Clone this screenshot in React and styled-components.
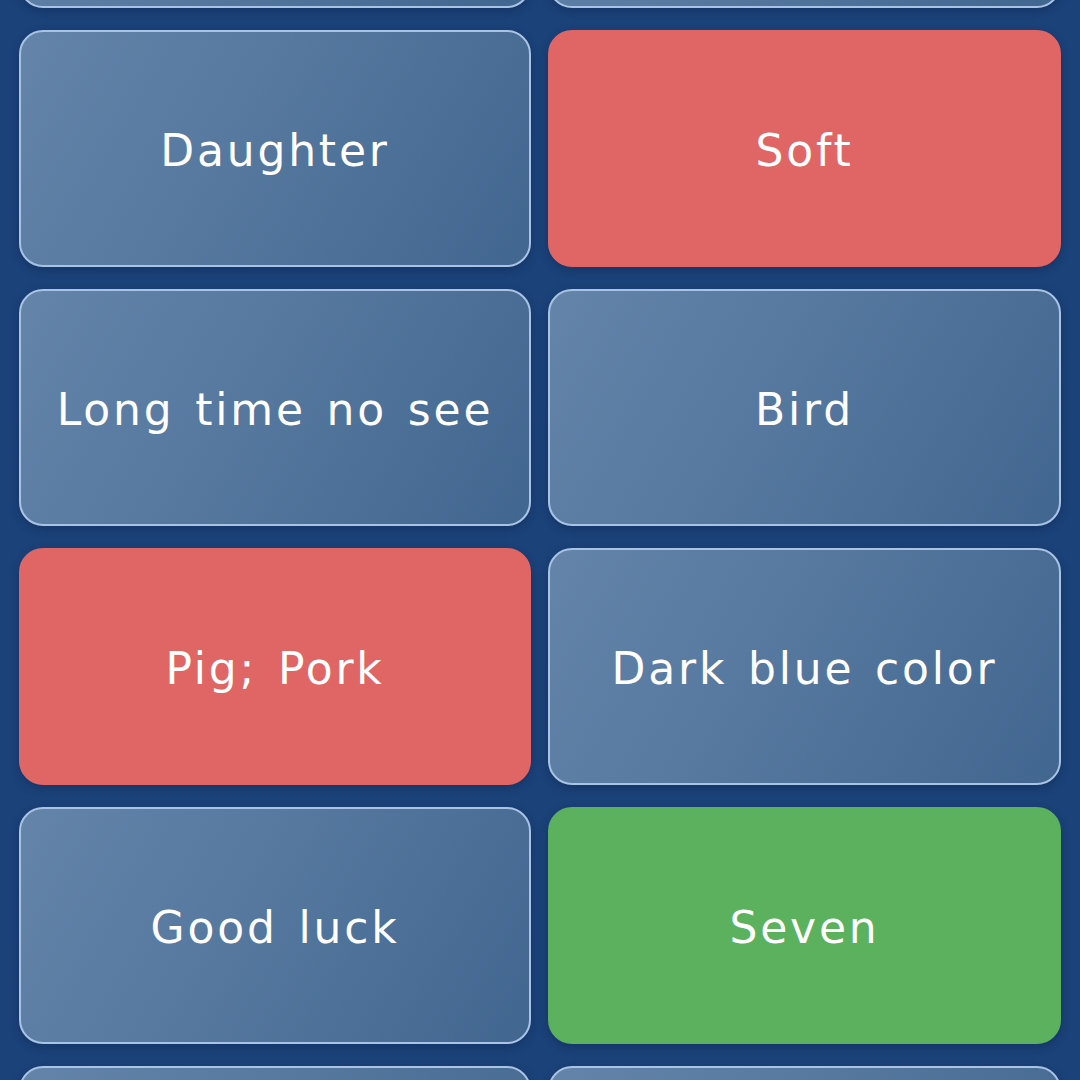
import React from "react";
import styled, { createGlobalStyle } from "styled-components";

const Global = createGlobalStyle`
  html, body {
    margin: 0;
    padding: 0;
    background: #1b4279;
    overflow: hidden;
  }
  body {
    width: 1080px;
    height: 1080px;
  }
`;

const Page = styled.div`
  width: 1080px;
  height: 1080px;
  overflow: hidden;
  background: #1b4279;
`;

const Grid = styled.div`
  display: grid;
  grid-template-columns: 512px 513px;
  grid-auto-rows: 237px;
  column-gap: 17px;
  row-gap: 22px;
  padding: 0 19px;
  margin-top: -229px;
`;

const variants = {
  plain: `
    background: linear-gradient(120deg, #6484a9 0%, #56789f 45%, #41668f 100%);
    border: 2px solid #a9c3e4;
  `,
  wrong: `
    background: #e06666;
    border: 2px solid #e06666;
  `,
  right: `
    background: #5bb15d;
    border: 2px solid #5bb15d;
  `,
};

const Card = styled.div`
  box-sizing: border-box;
  border-radius: 24px;
  display: flex;
  align-items: center;
  justify-content: center;
  color: #ffffff;
  font-family: "DejaVu Sans", "Open Sans", sans-serif;
  font-size: 44px;
  font-weight: 400;
  letter-spacing: 2.8px;
  word-spacing: 4px;
  padding-top: 3px;
  box-shadow: 0 3px 8px rgba(10, 30, 70, 0.35);
  ${(p) => variants[p.$variant]}
`;

const cards = [
  ["", "plain"],
  ["", "plain"],
  ["Daughter", "plain"],
  ["Soft", "wrong"],
  ["Long time no see", "plain"],
  ["Bird", "plain"],
  ["Pig; Pork", "wrong"],
  ["Dark blue color", "plain"],
  ["Good luck", "plain"],
  ["Seven", "right"],
  ["", "plain"],
  ["", "plain"],
];

export default function App() {
  return (
    <Page>
      <Global />
      <Grid>
        {cards.map(([label, v], i) => (
          <Card key={i} $variant={v}>
            {label}
          </Card>
        ))}
      </Grid>
    </Page>
  );
}
